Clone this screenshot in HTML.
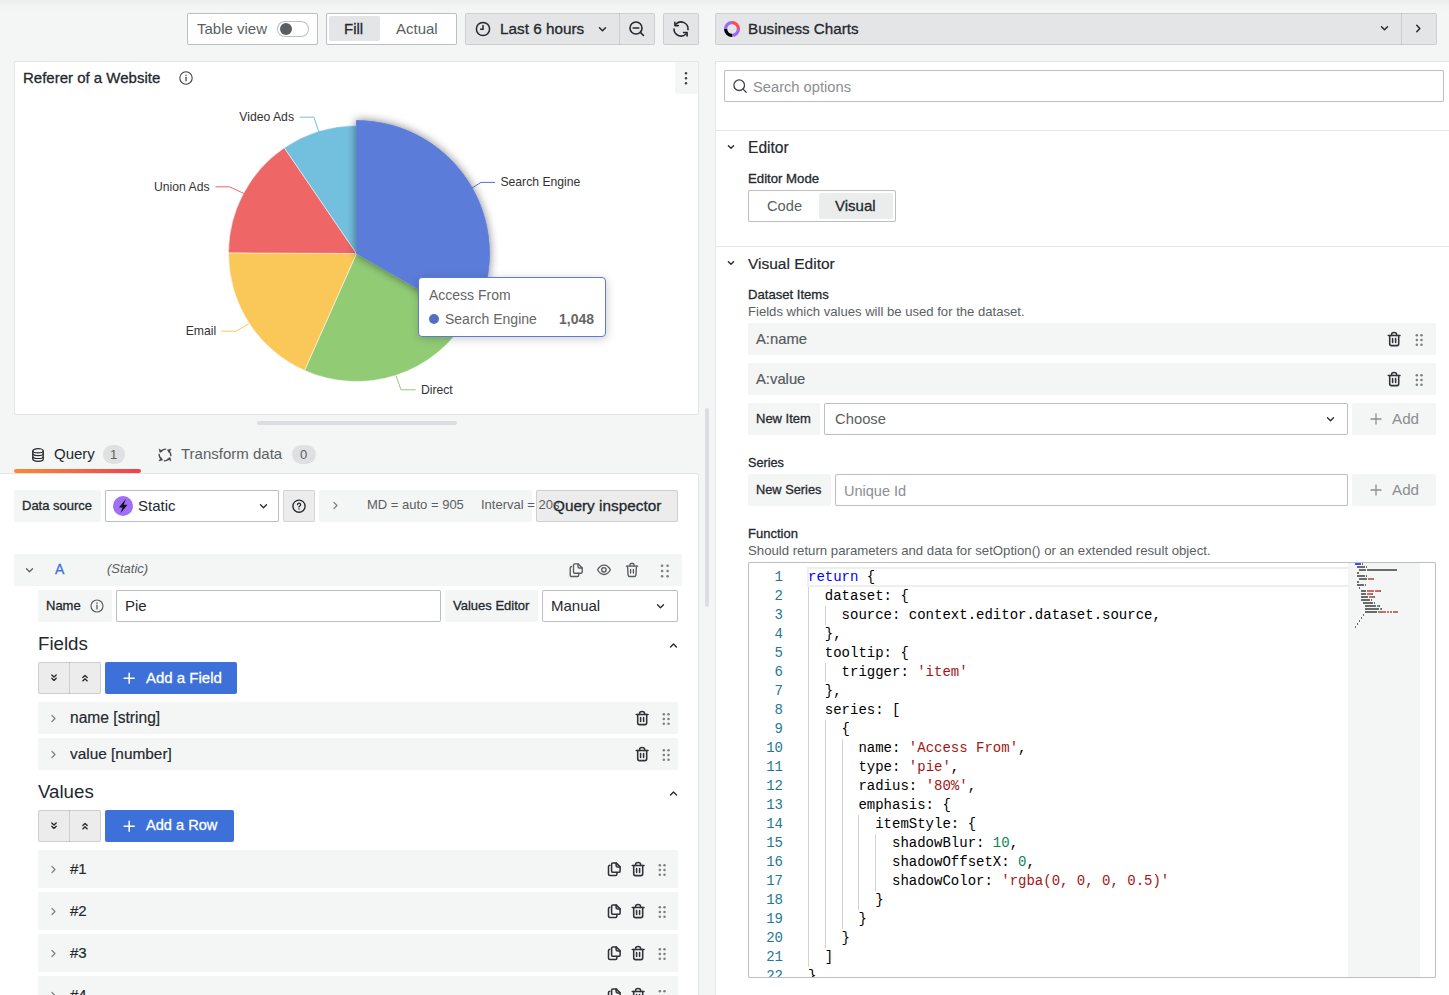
<!DOCTYPE html>
<html><head><meta charset="utf-8">
<style>
*{box-sizing:border-box;margin:0;padding:0}
html,body{width:1449px;height:995px;overflow:hidden}
body{position:relative;background:#f4f5f5;font-family:"Liberation Sans",sans-serif;color:#24292e;font-size:15px}
.a{position:absolute}
.t{position:absolute;white-space:nowrap;line-height:1}
.md{-webkit-text-stroke:0.3px currentColor}
.sm{-webkit-text-stroke:0.18px currentColor}
svg{position:absolute;overflow:visible}
.btnbox{position:absolute;border:1px solid rgba(36,41,46,0.30);border-radius:2px;background:#fff}
.sec{position:absolute;background:#e4e5e6;border:1px solid rgba(36,41,46,0.12);border-radius:2px}
.lbl{position:absolute;background:#f4f5f5;border-radius:2px}
.inp{position:absolute;background:#fff;border:1px solid rgba(36,41,46,0.30);border-radius:2px}
.row{position:absolute;background:#f4f5f5;border-radius:2px}
.code{position:absolute;font-family:"Liberation Mono",monospace;font-size:14px;line-height:19px;white-space:pre;color:#000}
.ln{position:absolute;font-family:"Liberation Mono",monospace;font-size:14px;line-height:19px;color:#237893;text-align:right;width:40px}
.k{color:#0000ff}.s{color:#a31515}.n{color:#098658}
</style></head><body>
<svg width="0" height="0" style="position:absolute"><defs>
<g id="trashA" fill="none" stroke="#585c5f" stroke-width="1.35" stroke-linecap="round" stroke-linejoin="round"><path d="M2.4 4.1H13.6"/><path d="M6 4.1V2.7C6 2 6.4 1.5 7.1 1.5H8.9C9.6 1.5 10 2 10 2.7V4.1"/><path d="M3.5 4.1L4.1 13.1C4.2 13.9 4.8 14.5 5.6 14.5H10.4C11.2 14.5 11.8 13.9 11.9 13.1L12.5 4.1"/><path d="M6.6 7.3V11M9.4 7.3V11"/></g>
<g id="dragA" fill="#7c7f82"><circle cx="2.1" cy="3.7" r="1.3"/><circle cx="7.6" cy="3.7" r="1.3"/><circle cx="2.1" cy="9" r="1.3"/><circle cx="7.6" cy="9" r="1.3"/><circle cx="2.1" cy="14.3" r="1.3"/><circle cx="7.6" cy="14.3" r="1.3"/></g>
<g id="copyA" fill="none" stroke="#585c5f" stroke-width="1.35" stroke-linecap="round" stroke-linejoin="round"><path d="M5.5 3C5.5 2.3 6 1.8 6.7 1.8H10L14.2 6V10C14.2 10.7 13.7 11.2 13 11.2H6.7C6 11.2 5.5 10.7 5.5 10Z"/><path d="M10 1.8V4.8C10 5.5 10.5 6 11.2 6H14.2"/><path d="M3.5 4.5C2.8 4.6 2.2 5.2 2.2 6V13.2C2.2 13.9 2.8 14.5 3.5 14.5H9.4C10.1 14.5 10.7 13.9 10.7 13.2V11.4"/></g>
<g id="eye" fill="none" stroke="#585c5f" stroke-width="1.35" stroke-linejoin="round"><path d="M2.6 7.8C4.1 5 6.2 3.1 9 3.1S13.9 5 15.4 7.8C13.9 10.6 11.8 12.5 9 12.5S4.1 10.6 2.6 7.8Z"/><circle cx="8.9" cy="7.8" r="2.2"/></g>
<g id="trash" fill="none" stroke="#2f3337" stroke-width="1.55" stroke-linecap="round" stroke-linejoin="round"><path d="M2.3 4.5H14"/><path d="M5.6 4.5V3.6C5.6 2.3 6.7 1.5 8.1 1.5S10.6 2.3 10.6 3.6V4.5"/><path d="M3.7 4.5V12.7C3.7 13.8 4.4 14.6 5.5 14.6H10.9C12 14.6 12.7 13.8 12.7 12.7V4.5"/><path d="M6.6 7.5V11.5M9.6 7.5V11.5"/></g>
<g id="drag" fill="#7c7f82"><circle cx="2.8" cy="4.3" r="1.25"/><circle cx="7.5" cy="4.3" r="1.25"/><circle cx="2.8" cy="9" r="1.25"/><circle cx="7.5" cy="9" r="1.25"/><circle cx="2.8" cy="13.7" r="1.25"/><circle cx="7.5" cy="13.7" r="1.25"/></g>
<g id="copy" fill="none" stroke="#2f3337" stroke-width="1.55" stroke-linecap="round" stroke-linejoin="round"><path d="M5.6 3.3C5.6 2.5 6.2 1.9 7 1.9H10.1L14.1 5.9V9.9C14.1 10.7 13.5 11.3 12.7 11.3H7C6.2 11.3 5.6 10.7 5.6 9.9Z"/><path d="M10.1 1.9V4.6C10.1 5.4 10.6 5.9 11.4 5.9H14.1"/><path d="M3.8 4.3C3 4.4 2.5 5 2.5 5.8V13.1C2.5 13.9 3.1 14.5 3.9 14.5H9.5C10.3 14.5 10.9 13.9 10.9 13.1V11.4"/></g>
</defs></svg>
<!-- top gradient -->
<div class="a" style="left:0;top:0;width:1449px;height:10px;background:linear-gradient(#eceeee,#f4f5f5)"></div>

<!-- Table view -->
<div class="btnbox" style="left:187px;top:13px;width:131px;height:32px"></div>
<div class="t" style="left:197px;top:21px;font-size:15px;color:#5b5f62">Table view</div>
<div class="a" style="left:277px;top:21px;width:32px;height:16px;border:1px solid rgba(36,41,46,0.30);border-radius:8px;background:#fff"></div>
<div class="a" style="left:279.5px;top:22.8px;width:12.5px;height:12.5px;border-radius:6.25px;background:#5b5f62"></div>

<!-- Fill / Actual -->
<div class="btnbox" style="left:326px;top:13px;width:131px;height:32px"></div>
<div class="a" style="left:329px;top:16px;width:51px;height:25px;background:#e4e5e6;border-radius:2px"></div>
<div class="t md" style="left:344px;top:21px;font-size:15px;color:#24292e">Fill</div>
<div class="t" style="left:396px;top:21px;font-size:15px;color:#5b5f62">Actual</div>

<!-- time picker -->
<div class="sec" style="left:465px;top:13px;width:190px;height:32px"></div>
<div class="a" style="left:619px;top:13px;width:1px;height:32px;background:rgba(36,41,46,0.12)"></div>
<svg style="left:475px;top:21px" width="16" height="16" viewBox="0 0 16 16"><circle cx="8" cy="8" r="6.6" fill="none" stroke="#24292e" stroke-width="1.5"/><path d="M8 4.5V8.3H5.6" fill="none" stroke="#24292e" stroke-width="1.5" stroke-linecap="round"/></svg>
<div class="t md" style="left:500px;top:21px;font-size:15.3px">Last 6 hours</div>
<svg style="left:597px;top:24px" width="11" height="11" viewBox="0 0 11 11"><path d="M2.5 3.8L5.5 6.8L8.5 3.8" fill="none" stroke="#24292e" stroke-width="1.5" stroke-linecap="round" stroke-linejoin="round"/></svg>
<svg style="left:628px;top:20px" width="18" height="18" viewBox="0 0 18 18"><circle cx="8" cy="8" r="6" fill="none" stroke="#24292e" stroke-width="1.6"/><path d="M5.2 8H10.8M12.4 12.4L15.5 15.5" fill="none" stroke="#24292e" stroke-width="1.6" stroke-linecap="round"/></svg>

<!-- refresh -->
<div class="sec" style="left:663px;top:13px;width:36px;height:32px"></div>
<svg style="left:672px;top:20px" width="18" height="18" viewBox="0 0 18 18"><g fill="none" stroke="#24292e" stroke-width="1.6" stroke-linecap="round" stroke-linejoin="round"><path d="M4.05 4.05A7 7 0 0 1 16 9.7"/><path d="M2.9 2.3V5.6H6.3"/><path d="M2 9A7 7 0 0 0 13.95 13.95"/><path d="M11.6 12.5H15.1V16"/></g></svg>

<!-- Business charts picker -->
<div class="sec" style="left:715px;top:13px;width:722px;height:32px"></div>
<div class="a" style="left:1401px;top:13px;width:1px;height:32px;background:rgba(36,41,46,0.12)"></div>
<svg style="left:724px;top:21px" width="16" height="16" viewBox="0 0 16 16"><path d="M8 1.6A6.4 6.4 0 0 1 14.4 8" fill="none" stroke="#ff4a52" stroke-width="3.2"/><path d="M14.4 8A6.4 6.4 0 0 1 8 14.4" fill="none" stroke="#9a68fa" stroke-width="3.2"/><path d="M8 14.4A6.4 6.4 0 0 1 1.6 8" fill="none" stroke="#000" stroke-width="3.2"/><path d="M1.6 8A6.4 6.4 0 0 1 8 1.6" fill="none" stroke="#9a68fa" stroke-width="3.2"/></svg>
<div class="t md" style="left:748px;top:21px;font-size:15.2px">Business Charts</div>
<svg style="left:1379px;top:23px" width="11" height="11" viewBox="0 0 11 11"><path d="M2.5 3.8L5.5 6.8L8.5 3.8" fill="none" stroke="#24292e" stroke-width="1.5" stroke-linecap="round" stroke-linejoin="round"/></svg>
<svg style="left:1413px;top:23px" width="11" height="11" viewBox="0 0 11 11"><path d="M3.8 2.3L6.8 5.5L3.8 8.7" fill="none" stroke="#24292e" stroke-width="1.5" stroke-linecap="round" stroke-linejoin="round"/></svg>

<!-- PANEL -->
<div class="a" style="left:14px;top:61px;width:685px;height:354px;background:#fff;border:1px solid rgba(36,41,46,0.12);border-radius:2px"></div>
<div class="t md" style="left:23px;top:70px;font-size:15px">Referer of a Website</div>
<svg style="left:178px;top:70px" width="16" height="16" viewBox="0 0 16 16"><circle cx="8" cy="8" r="6.2" fill="none" stroke="#3b3f43" stroke-width="1.1"/><path d="M8 7.3V10.8" stroke="#3b3f43" stroke-width="1.2" stroke-linecap="round"/><circle cx="8" cy="5.2" r="0.75" fill="#3b3f43"/></svg>
<div class="a" style="left:675px;top:62px;width:23px;height:32px;background:#f4f5f5;border-radius:2px"></div>
<svg style="left:683px;top:70px" width="6" height="16" viewBox="0 0 6 16"><circle cx="3" cy="3.3" r="1.2" fill="#3b3f43"/><circle cx="3" cy="8.3" r="1.2" fill="#3b3f43"/><circle cx="3" cy="13.3" r="1.2" fill="#3b3f43"/></svg>

<!-- PIE -->
<svg id="pie" style="left:0;top:0" width="720" height="420" viewBox="0 0 720 420"><defs><filter id="sh" x="-30%" y="-30%" width="160%" height="160%"><feGaussianBlur in="SourceAlpha" stdDeviation="5"/><feComponentTransfer><feFuncA type="linear" slope="0.5"/></feComponentTransfer><feMerge><feMergeNode/><feMergeNode in="SourceGraphic"/></feMerge></filter></defs><path d="M356.5,253.5L467.48,317.28A128,128 0 0 1 304.51,370.46Z" fill="#91cc75" stroke="#fff" stroke-width="0.5" stroke-linejoin="round"/><path d="M356.5,253.5L304.51,370.46A128,128 0 0 1 228.50,252.80Z" fill="#fac858" stroke="#fff" stroke-width="0.5" stroke-linejoin="round"/><path d="M356.5,253.5L228.50,252.80A128,128 0 0 1 284.33,147.78Z" fill="#ee6666" stroke="#fff" stroke-width="0.5" stroke-linejoin="round"/><path d="M356.5,253.5L284.33,147.78A128,128 0 0 1 356.50,125.50Z" fill="#73c0de" stroke="#fff" stroke-width="0.5" stroke-linejoin="round"/><path d="M356.5,253.5L356.50,120.50A133,133 0 0 1 471.81,319.77Z" fill="#5c7bd9" stroke="#5c7bd9" stroke-width="0.8" filter="url(#sh)"/><polyline points="471.4,188.4 481,182.4 495.1,182.4" fill="none" stroke="#5470c6" stroke-width="1"/><polyline points="318.9,132.1 313.9,117.2 299.7,117.2" fill="none" stroke="#73c0de" stroke-width="1"/><polyline points="243.7,193.4 229.4,186.8 215.5,186.8" fill="none" stroke="#ee6666" stroke-width="1"/><polyline points="248.6,323.9 236,331.2 221.2,331.2" fill="none" stroke="#fac858" stroke-width="1"/><polyline points="396,375.6 401,389.8 415.6,389.8" fill="none" stroke="#91cc75" stroke-width="1"/><text x="500.4" y="186.0" text-anchor="start" font-family="Liberation Sans" font-size="12.2" fill="#333">Search Engine</text><text x="294" y="121.4" text-anchor="end" font-family="Liberation Sans" font-size="12.2" fill="#333">Video Ads</text><text x="209.6" y="191.0" text-anchor="end" font-family="Liberation Sans" font-size="12.2" fill="#333">Union Ads</text><text x="216.2" y="335.4" text-anchor="end" font-family="Liberation Sans" font-size="12.2" fill="#333">Email</text><text x="420.9" y="394.0" text-anchor="start" font-family="Liberation Sans" font-size="12.2" fill="#333">Direct</text></svg>

<!-- tooltip -->
<div class="a" style="left:418px;top:277px;width:188px;height:60px;background:#fff;border:1px solid #5c7bd9;border-radius:4px;box-shadow:1px 2px 10px rgba(0,0,0,0.2)"></div>
<div class="t" style="left:429px;top:288px;font-size:14px;color:#666">Access From</div>
<div class="a" style="left:429px;top:314px;width:10px;height:10px;border-radius:5px;background:#5470c6"></div>
<div class="t" style="left:445px;top:312px;font-size:14px;color:#666">Search Engine</div>
<div class="t" style="left:559px;top:312px;font-size:14px;color:#666;font-weight:bold">1,048</div>
<!-- splitter -->
<div class="a" style="left:257px;top:421px;width:200px;height:4px;background:#dcdde0;border-radius:2px"></div>
<div class="a" style="left:705px;top:408px;width:4px;height:199px;background:#dcdde0;border-radius:2px"></div>
<div class="a" style="left:715px;top:61px;width:1px;height:934px;background:rgba(36,41,46,0.12)"></div>

<!-- LEFT LOWER -->
<!-- tabs -->
<svg style="left:32px;top:448px" width="12" height="14" viewBox="0 0 12 14"><path d="M0.8 2.8C0.8 1.6 3.3 0.7 6 0.7S11.2 1.6 11.2 2.8V11.2C11.2 12.4 8.7 13.3 6 13.3S0.8 12.4 0.8 11.2Z" fill="none" stroke="#24292e" stroke-width="1.3"/><path d="M0.8 2.8C0.8 4 3.3 4.9 6 4.9S11.2 4 11.2 2.8M0.8 5.6C0.8 6.8 3.3 7.7 6 7.7S11.2 6.8 11.2 5.6M0.8 8.4C0.8 9.6 3.3 10.5 6 10.5S11.2 9.6 11.2 8.4" fill="none" stroke="#24292e" stroke-width="1.2"/><circle cx="2.8" cy="6.9" r="0.55" fill="#24292e"/><circle cx="2.8" cy="9.7" r="0.55" fill="#24292e"/></svg>
<div class="t" style="left:54px;top:446px;font-size:15px">Query</div>
<div class="a" style="left:103px;top:445px;width:22px;height:19px;border-radius:10px;background:#dfe0e1"></div>
<div class="t" style="left:110px;top:448px;font-size:13px;color:#5b5f62">1</div>
<svg style="left:158px;top:448px" width="14" height="14" viewBox="0 0 14 14"><g fill="#44484c" stroke="#44484c" stroke-width="0.5" stroke-linejoin="round"><path d="M1 0.9L4.4 3.2L1.9 4.6Z"/><path d="M13.1 1L10.8 4.4L9.4 1.9Z"/><path d="M13 13.1L9.6 10.8L12.1 9.4Z"/><path d="M0.9 13L3.2 9.6L4.6 12.1Z"/></g><g fill="none" stroke="#44484c" stroke-width="1.4" stroke-linecap="round"><path d="M3.5 2.6Q5.2 1.3 7.6 1.1"/><path d="M11.4 3.5Q12.7 5.2 12.9 7.6"/><path d="M10.5 11.4Q8.8 12.7 6.4 12.9"/><path d="M2.6 10.5Q1.3 8.8 1.1 6.4"/></g></svg>
<div class="t" style="left:181px;top:446px;font-size:15px;color:#5b5f62">Transform data</div>
<div class="a" style="left:292px;top:445px;width:24px;height:19px;border-radius:10px;background:#dfe0e1"></div>
<div class="t" style="left:300px;top:448px;font-size:13px;color:#5b5f62">0</div>

<!-- lower card -->
<div class="a" style="left:-2px;top:473px;width:701px;height:530px;background:#fff;border:1px solid rgba(36,41,46,0.12);border-radius:0 3px 0 0"></div>
<div class="a" style="left:14px;top:469px;width:127px;height:4px;border-radius:2px;background:linear-gradient(90deg,#ff8833,#f53e4c)"></div>

<!-- data source row -->
<div class="lbl" style="left:14px;top:490px;width:87px;height:32px"></div>
<div class="t md" style="left:22px;top:499px;font-size:13px">Data source</div>
<div class="inp" style="left:105px;top:490px;width:174px;height:32px"></div>
<svg style="left:113px;top:496px" width="20" height="20" viewBox="0 0 20 20"><circle cx="10" cy="10" r="10" fill="#a06ef7"/><path d="M12.9 2.9L5.9 11.4H9.6L7.5 17.3L14.4 8.7H10.7Z" fill="#111"/></svg>
<div class="t" style="left:138px;top:498px;font-size:15px">Static</div>
<svg style="left:258px;top:501px" width="11" height="11" viewBox="0 0 11 11"><path d="M2.5 3.8L5.5 6.8L8.5 3.8" fill="none" stroke="#24292e" stroke-width="1.3" stroke-linecap="round" stroke-linejoin="round"/></svg>
<div class="sec" style="left:283px;top:490px;width:32px;height:32px;background:#ececed"></div>
<svg style="left:291px;top:498px" width="16" height="16" viewBox="0 0 16 16"><circle cx="8" cy="8.2" r="6.1" fill="none" stroke="#24292e" stroke-width="1.35"/><path d="M6.5 6.7A1.55 1.55 0 1 1 8.7 8.1C8.2 8.35 8 8.6 8 9.1" fill="none" stroke="#24292e" stroke-width="1.3" stroke-linecap="round"/><circle cx="8" cy="11" r="0.75" fill="#24292e"/></svg>
<div class="lbl" style="left:319px;top:490px;width:213px;height:32px"></div>
<svg style="left:330px;top:500px" width="11" height="11" viewBox="0 0 11 11"><path d="M4 2.5L7 5.5L4 8.5" fill="none" stroke="#7c7f82" stroke-width="1.2" stroke-linecap="round" stroke-linejoin="round"/></svg>
<div class="t" style="left:367px;top:498px;font-size:13px;color:#5b5f62">MD = auto = 905</div>
<div class="sec" style="left:536px;top:490px;width:142px;height:32px;background:#ececec;border-color:rgba(36,41,46,0.15)"></div>
<div class="t md" style="left:553px;top:498px;font-size:15.35px">Query inspector</div>
<div class="t" style="left:481px;top:498px;font-size:13px;color:#5b5f62">Interval = 20s</div>

<!-- row A -->
<div class="row" style="left:14px;top:554px;width:668px;height:32px"></div>
<svg style="left:24px;top:565px" width="11" height="11" viewBox="0 0 11 11"><path d="M2.5 3.8L5.5 6.8L8.5 3.8" fill="none" stroke="#5b5f62" stroke-width="1.3" stroke-linecap="round" stroke-linejoin="round"/></svg>
<div class="t md" style="left:55px;top:562px;font-size:14px;color:#3d71d9">A</div>
<div class="t" style="left:107px;top:562px;font-size:13px;color:#5b5f62;font-style:italic">(Static)</div>
<svg style="left:568px;top:562px" width="16" height="16" viewBox="0 0 16 16"><use href="#copyA"/></svg>
<svg style="left:595px;top:562px" width="18" height="16" viewBox="0 0 18 16"><use href="#eye"/></svg>
<svg style="left:624px;top:562px" width="16" height="16" viewBox="0 0 16 16"><use href="#trashA"/></svg>
<svg style="left:660px;top:562px" width="10" height="16" viewBox="0 0 10 16"><use href="#dragA"/></svg>

<!-- name row -->
<div class="lbl" style="left:38px;top:590px;width:74px;height:32px"></div>
<div class="t md" style="left:46px;top:599px;font-size:13px">Name</div>
<svg style="left:89px;top:598px" width="16" height="16" viewBox="0 0 16 16"><circle cx="8" cy="8" r="6" fill="none" stroke="#5b5f62" stroke-width="1.2"/><path d="M8 7.2V11" stroke="#5b5f62" stroke-width="1.3" stroke-linecap="round"/><circle cx="8" cy="5.1" r="0.8" fill="#5b5f62"/></svg>
<div class="inp" style="left:116px;top:590px;width:325px;height:32px"></div>
<div class="t" style="left:125px;top:598px;font-size:15px">Pie</div>
<div class="lbl" style="left:445px;top:590px;width:93px;height:32px"></div>
<div class="t md" style="left:453px;top:599px;font-size:13px">Values Editor</div>
<div class="inp" style="left:542px;top:590px;width:136px;height:32px"></div>
<div class="t" style="left:551px;top:598px;font-size:15px">Manual</div>
<svg style="left:655px;top:601px" width="11" height="11" viewBox="0 0 11 11"><path d="M2.5 3.8L5.5 6.8L8.5 3.8" fill="none" stroke="#24292e" stroke-width="1.3" stroke-linecap="round" stroke-linejoin="round"/></svg>

<!-- Fields -->
<div class="t" style="left:38px;top:635px;font-size:18.7px">Fields</div>
<svg style="left:668px;top:640px" width="11" height="11" viewBox="0 0 11 11"><path d="M2.5 7L5.5 4L8.5 7" fill="none" stroke="#24292e" stroke-width="1.4" stroke-linecap="round" stroke-linejoin="round"/></svg>
<div class="sec" style="left:38px;top:662px;width:63px;height:32px;background:#ececec;border-color:rgba(36,41,46,0.15)"></div>
<div class="a" style="left:69px;top:662px;width:1px;height:32px;background:rgba(36,41,46,0.15)"></div>
<svg class="dd" style="left:49px;top:672px" width="10" height="12" viewBox="0 0 10 12"><path d="M2.8 2.9L5 5L7.2 2.9M2.8 6.3L5 8.4L7.2 6.3" fill="none" stroke="#24292e" stroke-width="1.35" stroke-linecap="round" stroke-linejoin="round"/></svg>
<svg class="du" style="left:80px;top:672px" width="10" height="12" viewBox="0 0 10 12"><path d="M2.8 5.5L5 3.4L7.2 5.5M2.8 8.9L5 6.8L7.2 8.9" fill="none" stroke="#24292e" stroke-width="1.35" stroke-linecap="round" stroke-linejoin="round"/></svg>
<div class="a" style="left:105px;top:662px;width:132px;height:32px;background:#3d71d9;border-radius:2px"></div>
<svg style="left:122px;top:671px" width="14" height="14" viewBox="0 0 14 14"><path d="M7.2 2.2V12.2M2.2 7.2H12.2" stroke="#fff" stroke-width="1.5" stroke-linecap="round"/></svg>
<div class="t md" style="left:146px;top:670px;font-size:15px;color:#fff">Add a Field</div>

<div class="row" style="left:38px;top:702px;width:640px;height:32px"></div>
<svg style="left:48px;top:713px" width="11" height="11" viewBox="0 0 11 11"><path d="M4 2.5L7 5.5L4 8.5" fill="none" stroke="#7c7f82" stroke-width="1.2" stroke-linecap="round" stroke-linejoin="round"/></svg>
<div class="t sm" style="left:70px;top:710px;font-size:15.6px">name [string]</div>
<svg style="left:634px;top:710px" width="16" height="16" viewBox="0 0 16 16"><use href="#trash"/></svg>
<svg style="left:661px;top:710px" width="10" height="16" viewBox="0 0 10 16"><use href="#drag"/></svg>

<div class="row" style="left:38px;top:738px;width:640px;height:32px"></div>
<svg style="left:48px;top:749px" width="11" height="11" viewBox="0 0 11 11"><path d="M4 2.5L7 5.5L4 8.5" fill="none" stroke="#7c7f82" stroke-width="1.2" stroke-linecap="round" stroke-linejoin="round"/></svg>
<div class="t sm" style="left:70px;top:746px;font-size:15.4px">value [number]</div>
<svg style="left:634px;top:746px" width="16" height="16" viewBox="0 0 16 16"><use href="#trash"/></svg>
<svg style="left:661px;top:746px" width="10" height="16" viewBox="0 0 10 16"><use href="#drag"/></svg>

<!-- Values -->
<div class="t" style="left:38px;top:783px;font-size:18.7px">Values</div>
<svg style="left:668px;top:788px" width="11" height="11" viewBox="0 0 11 11"><path d="M2.5 7L5.5 4L8.5 7" fill="none" stroke="#24292e" stroke-width="1.4" stroke-linecap="round" stroke-linejoin="round"/></svg>
<div class="sec" style="left:38px;top:810px;width:63px;height:32px;background:#ececec;border-color:rgba(36,41,46,0.15)"></div>
<div class="a" style="left:69px;top:810px;width:1px;height:32px;background:rgba(36,41,46,0.15)"></div>
<svg style="left:49px;top:820px" width="10" height="12" viewBox="0 0 10 12"><path d="M2.8 2.9L5 5L7.2 2.9M2.8 6.3L5 8.4L7.2 6.3" fill="none" stroke="#24292e" stroke-width="1.35" stroke-linecap="round" stroke-linejoin="round"/></svg>
<svg style="left:80px;top:820px" width="10" height="12" viewBox="0 0 10 12"><path d="M2.8 5.5L5 3.4L7.2 5.5M2.8 8.9L5 6.8L7.2 8.9" fill="none" stroke="#24292e" stroke-width="1.35" stroke-linecap="round" stroke-linejoin="round"/></svg>
<div class="a" style="left:105px;top:810px;width:129px;height:32px;background:#3d71d9;border-radius:2px"></div>
<svg style="left:122px;top:819px" width="14" height="14" viewBox="0 0 14 14"><path d="M7.2 2.2V12.2M2.2 7.2H12.2" stroke="#fff" stroke-width="1.5" stroke-linecap="round"/></svg>
<div class="t md" style="left:146px;top:818px;font-size:14.6px;color:#fff">Add a Row</div>
<div class="row" style="left:38px;top:850px;width:640px;height:38px"></div>
<svg style="left:48px;top:864px" width="11" height="11" viewBox="0 0 11 11"><path d="M4 2.5L7 5.5L4 8.5" fill="none" stroke="#7c7f82" stroke-width="1.2" stroke-linecap="round" stroke-linejoin="round"/></svg>
<div class="t sm" style="left:70px;top:861px;font-size:15px">#1</div>
<svg style="left:606px;top:861px" width="16" height="16" viewBox="0 0 16 16"><use href="#copy"/></svg>
<svg style="left:630px;top:861px" width="16" height="16" viewBox="0 0 16 16"><use href="#trash"/></svg>
<svg style="left:657px;top:861px" width="10" height="16" viewBox="0 0 10 16"><use href="#drag"/></svg>
<div class="row" style="left:38px;top:892px;width:640px;height:38px"></div>
<svg style="left:48px;top:906px" width="11" height="11" viewBox="0 0 11 11"><path d="M4 2.5L7 5.5L4 8.5" fill="none" stroke="#7c7f82" stroke-width="1.2" stroke-linecap="round" stroke-linejoin="round"/></svg>
<div class="t sm" style="left:70px;top:903px;font-size:15px">#2</div>
<svg style="left:606px;top:903px" width="16" height="16" viewBox="0 0 16 16"><use href="#copy"/></svg>
<svg style="left:630px;top:903px" width="16" height="16" viewBox="0 0 16 16"><use href="#trash"/></svg>
<svg style="left:657px;top:903px" width="10" height="16" viewBox="0 0 10 16"><use href="#drag"/></svg>
<div class="row" style="left:38px;top:934px;width:640px;height:38px"></div>
<svg style="left:48px;top:948px" width="11" height="11" viewBox="0 0 11 11"><path d="M4 2.5L7 5.5L4 8.5" fill="none" stroke="#7c7f82" stroke-width="1.2" stroke-linecap="round" stroke-linejoin="round"/></svg>
<div class="t sm" style="left:70px;top:945px;font-size:15px">#3</div>
<svg style="left:606px;top:945px" width="16" height="16" viewBox="0 0 16 16"><use href="#copy"/></svg>
<svg style="left:630px;top:945px" width="16" height="16" viewBox="0 0 16 16"><use href="#trash"/></svg>
<svg style="left:657px;top:945px" width="10" height="16" viewBox="0 0 10 16"><use href="#drag"/></svg>
<div class="row" style="left:38px;top:976px;width:640px;height:38px"></div>
<svg style="left:48px;top:990px" width="11" height="11" viewBox="0 0 11 11"><path d="M4 2.5L7 5.5L4 8.5" fill="none" stroke="#7c7f82" stroke-width="1.2" stroke-linecap="round" stroke-linejoin="round"/></svg>
<div class="t sm" style="left:70px;top:987px;font-size:15px">#4</div>
<svg style="left:606px;top:987px" width="16" height="16" viewBox="0 0 16 16"><use href="#copy"/></svg>
<svg style="left:630px;top:987px" width="16" height="16" viewBox="0 0 16 16"><use href="#trash"/></svg>
<svg style="left:657px;top:987px" width="10" height="16" viewBox="0 0 10 16"><use href="#drag"/></svg>


<!-- RIGHT PANE -->
<div class="a" style="left:715px;top:61px;width:740px;height:940px;background:#fff;border:1px solid rgba(36,41,46,0.12);border-radius:3px 0 0 0"></div>
<div class="inp" style="left:724px;top:70px;width:720px;height:32px"></div>
<svg style="left:732px;top:78px" width="16" height="16" viewBox="0 0 16 16"><circle cx="7.2" cy="7.2" r="5.3" fill="none" stroke="#3e4246" stroke-width="1.3"/><path d="M11.1 11.1L14.2 14.2" stroke="#3e4246" stroke-width="1.3" stroke-linecap="round"/></svg>
<div class="t" style="left:753px;top:80px;font-size:14.7px;color:#8b8e91">Search options</div>
<div class="a" style="left:716px;top:130px;width:740px;height:1px;background:rgba(36,41,46,0.12)"></div>

<svg style="left:726px;top:142px" width="10" height="10" viewBox="0 0 10 10"><path d="M2.4 3.8L5 6.3L7.6 3.8" fill="none" stroke="#24292e" stroke-width="1.4" stroke-linecap="round" stroke-linejoin="round"/></svg>
<div class="t sm" style="left:748px;top:139.5px;font-size:15.6px">Editor</div>
<div class="t md" style="left:748px;top:172px;font-size:13.2px">Editor Mode</div>
<div class="btnbox" style="left:748px;top:190px;width:148px;height:32px"></div>
<div class="a" style="left:819px;top:193px;width:74px;height:26px;background:#ebecec;border-radius:2px"></div>
<div class="t" style="left:767px;top:199px;font-size:14.7px;color:#5b5f62">Code</div>
<div class="t md" style="left:835px;top:198px;font-size:15px">Visual</div>
<div class="a" style="left:716px;top:246px;width:740px;height:1px;background:rgba(36,41,46,0.12)"></div>

<svg style="left:726px;top:258px" width="10" height="10" viewBox="0 0 10 10"><path d="M2.4 3.8L5 6.3L7.6 3.8" fill="none" stroke="#24292e" stroke-width="1.4" stroke-linecap="round" stroke-linejoin="round"/></svg>
<div class="t sm" style="left:748px;top:255.5px;font-size:15.5px">Visual Editor</div>
<div class="t md" style="left:748px;top:288px;font-size:13.1px">Dataset Items</div>
<div class="t" style="left:748px;top:305px;font-size:13.1px;color:#5b5f62">Fields which values will be used for the dataset.</div>

<div class="row" style="left:748px;top:323px;width:688px;height:32px"></div>
<div class="t sm" style="left:756px;top:331.5px;font-size:14.8px;color:#55595d">A:name</div>
<svg style="left:1386px;top:331px" width="16" height="16" viewBox="0 0 16 16"><use href="#trash"/></svg>
<svg style="left:1414px;top:331px" width="10" height="16" viewBox="0 0 10 16"><use href="#drag"/></svg>
<div class="row" style="left:748px;top:363px;width:688px;height:32px"></div>
<div class="t sm" style="left:756px;top:371.5px;font-size:14.8px;color:#55595d">A:value</div>
<svg style="left:1386px;top:371px" width="16" height="16" viewBox="0 0 16 16"><use href="#trash"/></svg>
<svg style="left:1414px;top:371px" width="10" height="16" viewBox="0 0 10 16"><use href="#drag"/></svg>

<div class="lbl" style="left:748px;top:403px;width:72px;height:32px"></div>
<div class="t md" style="left:756px;top:412px;font-size:13px">New Item</div>
<div class="inp" style="left:824px;top:403px;width:524px;height:32px"></div>
<div class="t" style="left:835px;top:412px;font-size:14.8px;color:#5b5f62">Choose</div>
<svg style="left:1325px;top:414px" width="11" height="11" viewBox="0 0 11 11"><path d="M2.5 3.8L5.5 6.8L8.5 3.8" fill="none" stroke="#24292e" stroke-width="1.3" stroke-linecap="round" stroke-linejoin="round"/></svg>
<div class="lbl" style="left:1352px;top:403px;width:84px;height:32px"></div>
<svg style="left:1370px;top:413px" width="12" height="12" viewBox="0 0 12 12"><path d="M6 1V11M1 6H11" stroke="#8b8e91" stroke-width="1.3" stroke-linecap="round"/></svg>
<div class="t" style="left:1392px;top:411px;font-size:15.2px;color:#8b8e91">Add</div>

<div class="t md" style="left:748px;top:457px;font-size:12.7px">Series</div>
<div class="lbl" style="left:748px;top:474px;width:83px;height:32px"></div>
<div class="t md" style="left:756px;top:484px;font-size:12.8px">New Series</div>
<div class="inp" style="left:835px;top:474px;width:513px;height:32px"></div>
<div class="t" style="left:844px;top:484px;font-size:14.5px;color:#8b8e91">Unique Id</div>
<div class="lbl" style="left:1352px;top:474px;width:84px;height:32px"></div>
<svg style="left:1370px;top:484px" width="12" height="12" viewBox="0 0 12 12"><path d="M6 1V11M1 6H11" stroke="#8b8e91" stroke-width="1.3" stroke-linecap="round"/></svg>
<div class="t" style="left:1392px;top:482px;font-size:15.2px;color:#8b8e91">Add</div>

<div class="t md" style="left:748px;top:527px;font-size:13px">Function</div>
<div class="t" style="left:748px;top:544px;font-size:13.2px;color:#5b5f62">Should return parameters and data for setOption() or an extended result object.</div>

<div class="a" style="left:748px;top:562px;width:688px;height:416px;border:1px solid rgba(36,41,46,0.30);border-radius:2px;overflow:hidden;background:#fff">
  <div class="a" style="left:599px;top:0;width:72px;height:420px;background:#f4f5f5"></div>
  <div class="a" style="left:58px;top:4px;width:542px;height:20px;border:2px solid #eeeeee;border-right:none"></div>
  <div class="a" style="left:59.0px;top:24px;width:1px;height:380px;background:#d3d3d3"></div><div class="a" style="left:75.8px;top:43px;width:1px;height:19px;background:#d3d3d3"></div><div class="a" style="left:75.8px;top:100px;width:1px;height:19px;background:#d3d3d3"></div><div class="a" style="left:75.8px;top:157px;width:1px;height:228px;background:#d3d3d3"></div><div class="a" style="left:92.6px;top:176px;width:1px;height:190px;background:#d3d3d3"></div><div class="a" style="left:109.4px;top:252px;width:1px;height:95px;background:#d3d3d3"></div><div class="a" style="left:126.2px;top:271px;width:1px;height:57px;background:#d3d3d3"></div>
  <div class="ln" style="left:-6px;top:5px">1</div><div class="ln" style="left:-6px;top:24px">2</div><div class="ln" style="left:-6px;top:43px">3</div><div class="ln" style="left:-6px;top:62px">4</div><div class="ln" style="left:-6px;top:81px">5</div><div class="ln" style="left:-6px;top:100px">6</div><div class="ln" style="left:-6px;top:119px">7</div><div class="ln" style="left:-6px;top:138px">8</div><div class="ln" style="left:-6px;top:157px">9</div><div class="ln" style="left:-6px;top:176px">10</div><div class="ln" style="left:-6px;top:195px">11</div><div class="ln" style="left:-6px;top:214px">12</div><div class="ln" style="left:-6px;top:233px">13</div><div class="ln" style="left:-6px;top:252px">14</div><div class="ln" style="left:-6px;top:271px">15</div><div class="ln" style="left:-6px;top:290px">16</div><div class="ln" style="left:-6px;top:309px">17</div><div class="ln" style="left:-6px;top:328px">18</div><div class="ln" style="left:-6px;top:347px">19</div><div class="ln" style="left:-6px;top:366px">20</div><div class="ln" style="left:-6px;top:385px">21</div><div class="ln" style="left:-6px;top:404px">22</div><div class="code" style="left:59px;top:5px"><span class="k">return</span> {</div><div class="code" style="left:59px;top:24px">  dataset: {</div><div class="code" style="left:59px;top:43px">    source: context.editor.dataset.source,</div><div class="code" style="left:59px;top:62px">  },</div><div class="code" style="left:59px;top:81px">  tooltip: {</div><div class="code" style="left:59px;top:100px">    trigger: <span class="s">'item'</span></div><div class="code" style="left:59px;top:119px">  },</div><div class="code" style="left:59px;top:138px">  series: [</div><div class="code" style="left:59px;top:157px">    {</div><div class="code" style="left:59px;top:176px">      name: <span class="s">'Access From'</span>,</div><div class="code" style="left:59px;top:195px">      type: <span class="s">'pie'</span>,</div><div class="code" style="left:59px;top:214px">      radius: <span class="s">'80%'</span>,</div><div class="code" style="left:59px;top:233px">      emphasis: {</div><div class="code" style="left:59px;top:252px">        itemStyle: {</div><div class="code" style="left:59px;top:271px">          shadowBlur: <span class="n">10</span>,</div><div class="code" style="left:59px;top:290px">          shadowOffsetX: <span class="n">0</span>,</div><div class="code" style="left:59px;top:309px">          shadowColor: <span class="s">'rgba(0, 0, 0, 0.5)'</span></div><div class="code" style="left:59px;top:328px">        }</div><div class="code" style="left:59px;top:347px">      }</div><div class="code" style="left:59px;top:366px">    }</div><div class="code" style="left:59px;top:385px">  ]</div><div class="code" style="left:59px;top:404px">}</div>
  <div class="a" style="left:606px;top:0px;width:6px;height:2px;background:rgba(0,0,255,0.7)"></div><div class="a" style="left:613px;top:0px;width:1px;height:2px;background:rgba(60,60,60,0.75)"></div><div class="a" style="left:608px;top:3px;width:8px;height:2px;background:rgba(60,60,60,0.75)"></div><div class="a" style="left:617px;top:3px;width:1px;height:2px;background:rgba(60,60,60,0.75)"></div><div class="a" style="left:610px;top:6px;width:7px;height:2px;background:rgba(60,60,60,0.75)"></div><div class="a" style="left:618px;top:6px;width:30px;height:2px;background:rgba(60,60,60,0.75)"></div><div class="a" style="left:608px;top:9px;width:2px;height:2px;background:rgba(60,60,60,0.75)"></div><div class="a" style="left:608px;top:12px;width:8px;height:2px;background:rgba(60,60,60,0.75)"></div><div class="a" style="left:617px;top:12px;width:1px;height:2px;background:rgba(60,60,60,0.75)"></div><div class="a" style="left:610px;top:15px;width:8px;height:2px;background:rgba(60,60,60,0.75)"></div><div class="a" style="left:619px;top:15px;width:6px;height:2px;background:rgba(163,21,21,0.6)"></div><div class="a" style="left:608px;top:18px;width:2px;height:2px;background:rgba(60,60,60,0.75)"></div><div class="a" style="left:608px;top:21px;width:7px;height:2px;background:rgba(60,60,60,0.75)"></div><div class="a" style="left:616px;top:21px;width:1px;height:2px;background:rgba(60,60,60,0.75)"></div><div class="a" style="left:610px;top:24px;width:1px;height:2px;background:rgba(60,60,60,0.75)"></div><div class="a" style="left:612px;top:27px;width:5px;height:2px;background:rgba(60,60,60,0.75)"></div><div class="a" style="left:618px;top:27px;width:7px;height:2px;background:rgba(163,21,21,0.6)"></div><div class="a" style="left:626px;top:27px;width:5px;height:2px;background:rgba(163,21,21,0.6)"></div><div class="a" style="left:631px;top:27px;width:1px;height:2px;background:rgba(60,60,60,0.75)"></div><div class="a" style="left:612px;top:30px;width:5px;height:2px;background:rgba(60,60,60,0.75)"></div><div class="a" style="left:618px;top:30px;width:5px;height:2px;background:rgba(163,21,21,0.6)"></div><div class="a" style="left:623px;top:30px;width:1px;height:2px;background:rgba(60,60,60,0.75)"></div><div class="a" style="left:612px;top:33px;width:7px;height:2px;background:rgba(60,60,60,0.75)"></div><div class="a" style="left:620px;top:33px;width:5px;height:2px;background:rgba(163,21,21,0.6)"></div><div class="a" style="left:625px;top:33px;width:1px;height:2px;background:rgba(60,60,60,0.75)"></div><div class="a" style="left:612px;top:36px;width:9px;height:2px;background:rgba(60,60,60,0.75)"></div><div class="a" style="left:622px;top:36px;width:1px;height:2px;background:rgba(60,60,60,0.75)"></div><div class="a" style="left:614px;top:39px;width:10px;height:2px;background:rgba(60,60,60,0.75)"></div><div class="a" style="left:625px;top:39px;width:1px;height:2px;background:rgba(60,60,60,0.75)"></div><div class="a" style="left:616px;top:42px;width:11px;height:2px;background:rgba(60,60,60,0.75)"></div><div class="a" style="left:628px;top:42px;width:2px;height:2px;background:rgba(9,134,88,0.7)"></div><div class="a" style="left:630px;top:42px;width:1px;height:2px;background:rgba(60,60,60,0.75)"></div><div class="a" style="left:616px;top:45px;width:14px;height:2px;background:rgba(60,60,60,0.75)"></div><div class="a" style="left:631px;top:45px;width:1px;height:2px;background:rgba(9,134,88,0.7)"></div><div class="a" style="left:632px;top:45px;width:1px;height:2px;background:rgba(60,60,60,0.75)"></div><div class="a" style="left:616px;top:48px;width:12px;height:2px;background:rgba(60,60,60,0.75)"></div><div class="a" style="left:629px;top:48px;width:8px;height:2px;background:rgba(163,21,21,0.6)"></div><div class="a" style="left:638px;top:48px;width:2px;height:2px;background:rgba(163,21,21,0.6)"></div><div class="a" style="left:641px;top:48px;width:2px;height:2px;background:rgba(163,21,21,0.6)"></div><div class="a" style="left:644px;top:48px;width:5px;height:2px;background:rgba(163,21,21,0.6)"></div><div class="a" style="left:614px;top:51px;width:1px;height:2px;background:rgba(60,60,60,0.75)"></div><div class="a" style="left:612px;top:54px;width:1px;height:2px;background:rgba(60,60,60,0.75)"></div><div class="a" style="left:610px;top:57px;width:1px;height:2px;background:rgba(60,60,60,0.75)"></div><div class="a" style="left:608px;top:60px;width:1px;height:2px;background:rgba(60,60,60,0.75)"></div><div class="a" style="left:606px;top:63px;width:1px;height:2px;background:rgba(60,60,60,0.75)"></div>
</div>


</body></html>
